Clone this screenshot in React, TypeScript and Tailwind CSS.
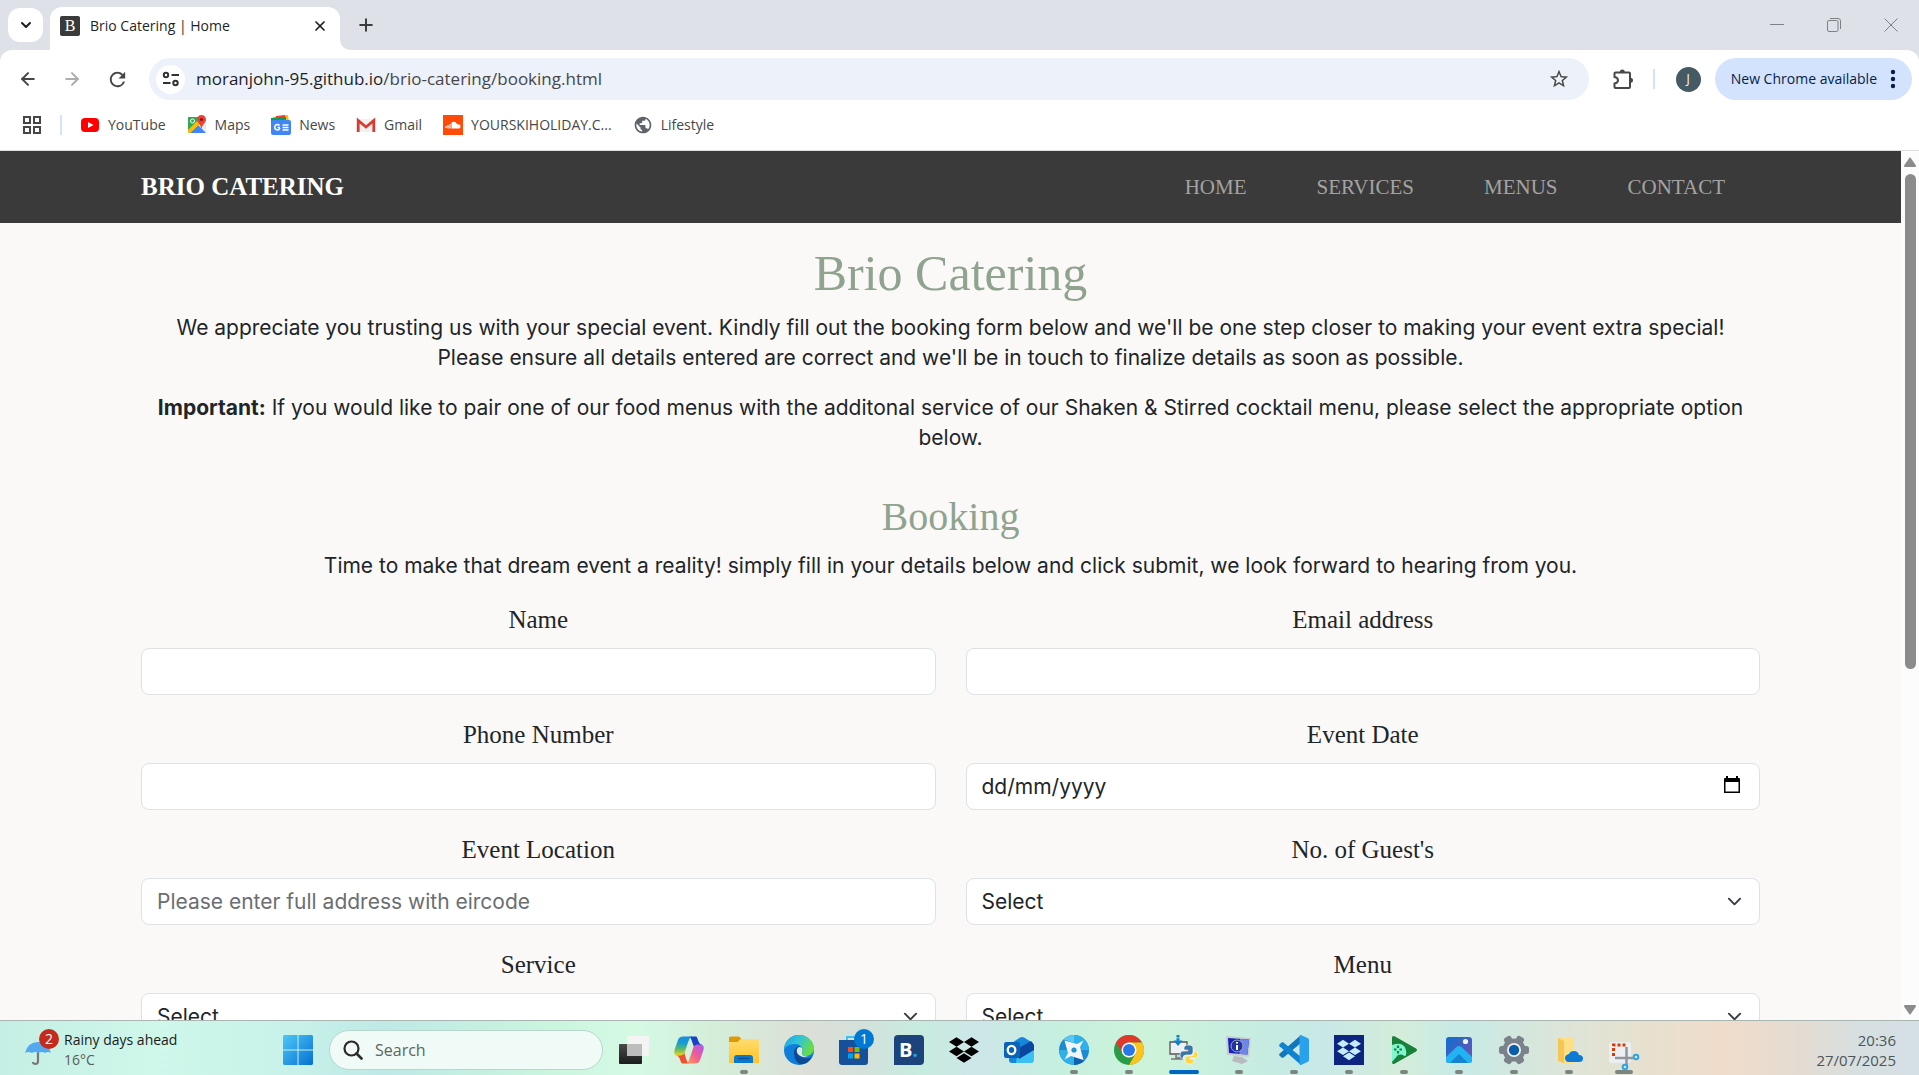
import React from "react";
import { ArrowLeft, ArrowRight, ChevronDown, Plus, X } from "lucide-react";
import { SiDropbox } from "react-icons/si";
import { MdOutlineStarBorder, MdRefresh, MdPublic } from "react-icons/md";

const ui = "font-['Open_Sans','Noto_Sans',sans-serif]";
const serif = "font-['Liberation_Serif',serif]";

/* ---------- Browser chrome ---------- */

function TabStrip() {
  return (
    <header className="flex h-[50px] shrink-0 items-end bg-[#dee1e8]">
      <button aria-label="Search tabs" className="mb-2 ml-2 flex h-[34px] w-[35px] items-center justify-center rounded-xl bg-white">
        <ChevronDown className="size-4 text-[#1f1f1f]" strokeWidth={3} />
      </button>
      <div className="ml-[7px] flex h-[43px] w-[290px] items-center rounded-t-xl bg-white pr-3 pb-[6px] pl-[10px]">
        <span className={`flex size-5 items-center justify-center rounded-xs bg-[#3a3a3a] text-base leading-none text-white ${serif}`}>B</span>
        <span className="ml-[10px] grow text-sm text-[#1f1f1f]">Brio Catering | Home</span>
        <button aria-label="Close tab"><X className="size-4 text-[#1f1f1f]" strokeWidth={2.6} /></button>
      </div>
      <svg className="size-3 text-white" viewBox="0 0 12 12" fill="currentColor"><path d="M0 0Q0 12 12 12H0z" /></svg>
      <button aria-label="New tab" className="mb-[15px] ml-1"><Plus className="size-5 text-[#3c3c3c]" strokeWidth={2.4} /></button>
      <div className="mb-[18px] ml-auto flex items-center gap-[43px] pr-[21px] text-[#7d8085]">
        <button aria-label="Minimize">
          <svg className="size-[14px]" viewBox="0 0 14 14" stroke="currentColor"><path d="M0 6.5h14" /></svg>
        </button>
        <button aria-label="Restore">
          <svg className="size-[14px]" viewBox="0 0 14 14" fill="none" stroke="currentColor"><rect x=".5" y="2.5" width="10.500" height="11" rx="1.500" /><path d="M3 .5h8a2.500 2.500 0 0 1 2.500 2.500v8" /></svg>
        </button>
        <button aria-label="Close">
          <svg className="size-[14px]" viewBox="0 0 14 14" stroke="currentColor"><path d="M.5.5l13 13M13.500.5l-13 13" /></svg>
        </button>
      </div>
    </header>
  );
}

function Toolbar() {
  return (
    <div className="shrink-0 bg-[#dee1e8]">
      <div className="flex h-[58px] items-center rounded-t-xl bg-white pr-[7px] pl-[18px] text-[#474747]">
        <button aria-label="Back"><ArrowLeft className="size-5" strokeWidth={2.4} /></button>
        <button aria-label="Forward" className="ml-6 text-[#adadad]"><ArrowRight className="size-5" strokeWidth={2.4} /></button>
        <button aria-label="Reload" className="ml-6"><MdRefresh className="size-[23px]" /></button>
        <div className="ml-5 flex h-[42px] grow items-center rounded-full bg-[#ecf1fa] pr-[19px] pl-[7px]">
          <button aria-label="View site information" className="flex size-[29px] items-center justify-center rounded-full bg-white">
            <svg className="size-[18px]" viewBox="0 0 18 18" fill="none" stroke="#333" strokeWidth="2"><circle cx="4" cy="5" r="2.200" /><path d="M9.500 5H17M1 13h7.500" /><circle cx="13.500" cy="13" r="2.200" /></svg>
          </button>
          <div className="relative ml-[11px] min-w-0 grow text-[17px] leading-7">
            <input aria-label="Address and search bar" readOnly defaultValue="moranjohn-95.github.io/brio-catering/booking.html" className="w-full bg-transparent text-transparent outline-none" />
            <span aria-hidden="true" className="pointer-events-none absolute inset-0 text-[#1f1f1f]">
              moranjohn-95.github.io<span className="text-[#474747]">/brio-catering/booking.html</span>
            </span>
          </div>
          <button aria-label="Bookmark this tab"><MdOutlineStarBorder className="size-[22px]" /></button>
        </div>
        <button aria-label="Extensions" className="ml-[23px]">
          <svg className="size-[22px]" viewBox="0 0 22 22"><path d="M2.500 5.500a1 1 0 0 1 1-1H17a1 1 0 0 1 1 1V19a1 1 0 0 1-1 1H3.500a1 1 0 0 1-1-1v-3.500q3.500-.5 3.500-3.200T2.500 9z" fill="none" stroke="#474747" strokeWidth="2" /><path d="M7.800 4a2.500 2.500 0 0 1 5 0zM18.500 9.800a2.500 2.500 0 0 1 0 5z" fill="#474747" /></svg>
        </button>
        <span className="ml-[19px] h-5 w-[2px] bg-[#d3e3fd]" />
        <button aria-label="Profile J" className="ml-[21px] flex size-[25px] items-center justify-center rounded-full bg-[#455a64] text-xs text-white">J</button>
        <button className="ml-[14px] flex h-[42px] items-center gap-[9px] rounded-full bg-[#d3e3fd] pr-3 pl-4 text-sm text-[#041e49]">
          New Chrome available
          <svg className="h-5 w-[14px]" viewBox="0 0 14 20" fill="currentColor"><circle cx="7" cy="3" r="2.200" /><circle cx="7" cy="10" r="2.200" /><circle cx="7" cy="17" r="2.200" /></svg>
        </button>
      </div>
    </div>
  );
}

const bookmarks = [
  {
    label: "YouTube",
    icon: <><rect x="1" y="3" width="18" height="14" rx="4" fill="#f00" /><path d="M8 7l5.500 3L8 13z" fill="#fff" /></>,
  },
  {
    label: "Maps",
    icon: <><path d="M1 2h12l5 8v8H1z" fill="#34a853" /><path d="M1 18L16 4l3 5v9z" fill="#e8eaed" /><path d="M3 18l8-8 8 8z" fill="#4285f4" /><path d="M1 15L13 3l3 3L3 18H1z" fill="#fbbc04" /><circle cx="5.500" cy="6" r="2" fill="none" stroke="#fff" /><path d="M14.500 0a4.500 4.500 0 0 1 4.500 4.500c0 3.500-3.500 4-4.500 9.500-1-5.500-4.500-6-4.500-9.500A4.500 4.500 0 0 1 14.500 0z" fill="#ea4335" /><circle cx="14.500" cy="4.500" r="1.600" fill="#811411" /></>,
  },
  {
    label: "News",
    icon: <><path d="M2 2l15-2 1 7H2z" fill="#fbbc04" /><path d="M5 1l9-1 1 5H5z" fill="#ea4335" /><path d="M0 3l15-1v5H0z" fill="#0c9d58" /><rect y="5" width="20" height="15" rx="2" fill="#4285f4" /><path d="M9 12.500H6.500M8.500 10.500A2.700 2.700 0 1 0 9 13" stroke="#fff" strokeWidth="1.500" fill="none" /><path d="M11.500 10h6M11.500 12.500h6M11.500 15h6" stroke="#fff" strokeWidth="1.400" /></>,
  },
  {
    label: "Gmail",
    icon: <><rect x="1" y="4" width="18" height="13" rx="1" fill="#f1f1f1" /><path d="M2.200 17V5.500L10 12l7.800-6.500V17" stroke="#d93b30" strokeWidth="2.800" fill="none" /></>,
  },
  {
    label: "YOURSKIHOLIDAY.C...",
    icon: <><rect width="20" height="20" fill="#ff4a0a" /><path d="M3 13v-2M5 13.500V10M7 13.500V9" stroke="#fff" strokeWidth="1.200" /><path d="M8.500 13.500V7.500c3-2 5.500 0 5.500 2 2-.5 3.500.5 3.500 2s-1 2-2 2z" fill="#fff" /></>,
  },
];

function BookmarksBar() {
  return (
    <nav aria-label="Bookmarks" className="flex h-[43px] shrink-0 items-center border-b border-[#dcdfe2] bg-white pb-2 pl-[22px] text-sm text-[#474747]">
      <button aria-label="All apps">
        <svg className="size-5" viewBox="0 0 20 20" fill="none" stroke="#474747" strokeWidth="2"><path d="M2 2h6v6H2zM12 2h6v6h-6zM2 12h6v6H2zM12 12h6v6h-6z" /></svg>
      </button>
      <span className="mr-[18px] ml-[18px] h-5 w-[2px] bg-[#d3e3fd]" />
      <div className="flex items-center gap-[21px]">
        {bookmarks.map((b) => (
          <a key={b.label} href="#" className="flex items-center gap-2">
            <svg className="size-5" viewBox="0 0 20 20">{b.icon}</svg>
            {b.label}
          </a>
        ))}
        <a href="#" className="flex items-center gap-2"><MdPublic className="size-5 text-[#5f6368]" />Lifestyle</a>
      </div>
    </nav>
  );
}

/* ---------- Web page ---------- */

const control = "h-[47px] w-full rounded-lg border border-[#dee2e6] bg-white px-[15px] text-[21px] text-[#212529] placeholder:text-[#6a6e73]";

function Field({ id, label, children }: { id: string; label: string; children: React.ReactNode }) {
  return (
    <div>
      <label htmlFor={id} className={`mb-[10px] block text-center text-[25px] leading-[37px] ${serif}`}>{label}</label>
      {children}
    </div>
  );
}

function SelectBox({ id }: { id: string }) {
  return (
    <div className="relative">
      <select id={id} className={`appearance-none ${control}`}><option>Select</option></select>
      <svg className="pointer-events-none absolute top-4 right-[18px] size-[15px]" viewBox="0 0 16 16" fill="none" stroke="#343a40" strokeLinecap="round" strokeLinejoin="round" strokeWidth="2"><path d="m2 5 6 6 6-6" /></svg>
    </div>
  );
}

function BookingPage() {
  return (
    <div className="min-w-0 grow overflow-hidden bg-[#faf9f7] font-[Inter,sans-serif] text-[21px] leading-[30px] text-[#212529]">
      <nav className={`flex h-[72px] items-center bg-[#3a3a3a] px-[141px] ${serif}`}>
        <a href="#" className="text-[25px] font-bold text-white">BRIO CATERING</a>
        <div className="ml-auto flex text-[#a3a3a3]">
          {["HOME", "SERVICES", "MENUS", "CONTACT"].map((t) => <a key={t} href="#" className="px-[35px]">{t}</a>)}
        </div>
      </nav>
      <main className="px-[141px] pt-5 text-center">
        <h1 className={`mb-[10px] text-[50px] leading-[60px] text-[#8fa38f] ${serif}`}>Brio Catering</h1>
        <p>We appreciate you trusting us with your special event. Kindly fill out the booking form below and we'll be one step closer to making your event extra special!<br />Please ensure all details entered are correct and we'll be in touch to finalize details as soon as possible.</p>
        <p className="mt-5"><strong className="font-bold">Important:</strong> If you would like to pair one of our food menus with the additonal service of our Shaken &amp; Stirred cocktail menu, please select the appropriate option<br />below.</p>
        <h2 className={`mt-10 mb-[10px] text-[40px] leading-[48px] text-[#8fa38f] ${serif}`}>Booking</h2>
        <p>Time to make that dream event a reality! simply fill in your details below and click submit, we look forward to hearing from you.</p>
        <form className="mt-5 grid grid-cols-2 gap-x-[30px] gap-y-[21px]">
          <Field id="name" label="Name"><input id="name" type="text" className={control} /></Field>
          <Field id="email" label="Email address"><input id="email" type="email" className={control} /></Field>
          <Field id="phone" label="Phone Number"><input id="phone" type="tel" className={control} /></Field>
          <Field id="date" label="Event Date">
            <div className="relative">
              <input id="date" type="text" placeholder="dd/mm/yyyy" className="h-[47px] w-full rounded-lg border border-[#dee2e6] bg-white px-[15px] text-[21px] text-[#212529] placeholder:text-[#212529]" />
              <button type="button" aria-label="Choose date" className="absolute top-3 right-[18px]">
                <svg className="size-5" viewBox="0 0 20 20"><path d="M4 1h2v2h8V1h2v2h1a1 1 0 0 1 1 1v14H2V4a1 1 0 0 1 1-1h1zM3.500 7v9.500h13V7z" fillRule="evenodd" /></svg>
              </button>
            </div>
          </Field>
          <Field id="location" label="Event Location"><input id="location" type="text" placeholder="Please enter full address with eircode" className={control} /></Field>
          <Field id="guests" label="No. of Guest's"><SelectBox id="guests" /></Field>
          <Field id="service" label="Service"><SelectBox id="service" /></Field>
          <Field id="menu" label="Menu"><SelectBox id="menu" /></Field>
        </form>
      </main>
    </div>
  );
}

function Scrollbar() {
  return (
    <div aria-hidden="true" className="flex w-[18px] shrink-0 flex-col items-center bg-[#fcfcfc] pt-[6px] pb-[5px]">
      <svg className="h-[10px] w-3" viewBox="0 0 12 10" fill="#8b8b8b"><path d="M6 0 12 8.500Q12 10 11 10H1Q0 10 0 8.500z" /></svg>
      <div className="mt-[7px] h-[495px] w-[11px] rounded-full bg-[#8b8b8b]" />
      <svg className="mt-auto h-[10px] w-3" viewBox="0 0 12 10" fill="#8b8b8b"><path d="M6 10 12 1.500Q12 0 11 0H1Q0 0 0 1.500z" /></svg>
    </div>
  );
}

/* ---------- Taskbar ---------- */

type Mark = "none" | "dot" | "active" | "wide";
type TaskbarApp = { name: string; mark: Mark; badge?: string; icon: React.ReactNode };

const Box = ({ children }: { children: React.ReactNode }) => <svg className="size-[30px] overflow-visible" viewBox="0 0 30 30">{children}</svg>;

const apps: TaskbarApp[] = [
  { name: "Task view", mark: "none", icon: <Box><defs><linearGradient id="tv" x2="0" y2="1"><stop stopColor="#4a4a4a" /><stop offset="1" stopColor="#1c1c1c" /></linearGradient></defs><rect y="9" width="23" height="20" rx="1" fill="url(#tv)" /><rect x="8" y="1" width="22" height="20" rx="1" fill="#f4f4f4" /><path d="M8 9h15v12H8z" fill="#bdbdbd" /></Box> },
  { name: "Copilot", mark: "none", icon: <Box><defs><linearGradient id="cp1" x2="0" y2="1"><stop stopColor="#1a8be6" /><stop offset=".35" stopColor="#169fd0" /><stop offset=".65" stopColor="#5cb86a" /><stop offset="1" stopColor="#f2d21c" /></linearGradient><linearGradient id="cp2" x1="1" x2="0" y2="1"><stop stopColor="#a45cf2" /><stop offset=".5" stopColor="#ee5c96" /><stop offset="1" stopColor="#ffa04d" /></linearGradient></defs><path d="M22 1.500h-7q2 1 3 5l2 5.500 3-2h5q-3-1-4-5t-2-3.500z" fill="#1443c9" /><path d="M8 28.500h7q-2-1-3-5L10 17l-4 3-4 .5q3 .5 4 4t2 4z" fill="#ee5030" /><path d="M9 1.500h9q-2.500 1-4 6l-3 9q-1 4-5 4H4q-5 0-3.500-5.500L4 5q1-3.500 5-3.500z" fill="url(#cp1)" /><path d="M21 28.500h-9q2.500-1 4-6l3-9q1-4 5-4h2q5 0 3.500 5.500L26 25q-1 3.500-5 3.500z" fill="url(#cp2)" /></Box> },
  { name: "File Explorer", mark: "dot", icon: <Box><defs><linearGradient id="fe" x2="0" y2="1"><stop stopColor="#ffdc6e" /><stop offset="1" stopColor="#ffc328" /></linearGradient></defs><path d="M0 3q0-1.500 1.500-1.500H10l3 3h-2L8 8H0z" fill="#dc9a08" /><path d="M0 7h9l3-3h16.500Q30 4 30 5.500V28H0z" fill="url(#fe)" /><path d="M5 28v-5q0-3 3-3h13q3 0 3 3v5z" fill="#0b78cf" /><path d="M9 23.500h11" stroke="#0a4b8c" strokeWidth="1.200" /></Box> },
  { name: "Microsoft Edge", mark: "none", icon: <Box><defs><linearGradient id="e1" x2="1" y2=".4"><stop stopColor="#1fa3e8" /><stop offset=".5" stopColor="#2fc3d8" /><stop offset="1" stopColor="#68dd4a" /></linearGradient></defs><circle cx="15" cy="15" r="15" fill="#0f7ddb" /><path d="M0 15C0 6 7 0 15 0s15 6 15 13c0 5-4 8-8 8-3 0-5-1-4-3 2-4-1-9-7-9C5 9 1 12 0 15z" fill="url(#e1)" /><path d="M10 18c0-4 3-7 6-7-3 4-2 8 1 11 3 2 8 2 11-.5-2 5-7 8.500-12 7.500-4-1.500-6-6-6-11z" fill="#0b4a94" /><path d="M15.500 12c3 0 3.500 3 2.500 5.500-1 3 3 4.500 6.500 3.500-4 2-9 .5-11-2.500-1.500-3-.5-6 2-6.500z" fill="#dde9e6" /></Box> },
  { name: "Microsoft Store", mark: "none", badge: "1", icon: <Box><path d="M8 6V2h12v4" fill="none" stroke="#35c5f3" strokeWidth="2" /><path d="M0 5h29v22q0 3-3 3H3q-3 0-3-3z" fill="#17509a" /><path d="M9 12h5v5H9z" fill="#f25022" /><path d="M15.500 12h5v5h-5z" fill="#7fba00" /><path d="M9 18.500h5v5H9z" fill="#00a4ef" /><path d="M15.500 18.500h5v5h-5z" fill="#ffb900" /></Box> },
  { name: "Booking.com", mark: "none", icon: <span className="flex size-[30px] items-center justify-center rounded-sm rounded-bl-none bg-[#1c437c] text-xl font-bold leading-none text-white">B<span className="text-[#1aa5ea]">.</span></span> },
  { name: "Dropbox", mark: "none", icon: <SiDropbox className="size-[30px] text-black" /> },
  { name: "Outlook", mark: "none", icon: <Box><path d="M5 10 16 2.500q2-1 4 0L29 8v17q0 3-3 3H8q-3 0-3-3z" fill="#1587dc" /><path d="M13 20 30 9v16q0 3-3 3H12z" fill="#3cc0f2" /><path d="M13 14 27 6l3 4v5L15 24z" fill="#0a47a0" /><rect y="7" width="16" height="16" rx="2" fill="#0b63b8" /><ellipse cx="7.500" cy="15" rx="3.800" ry="4.200" fill="none" stroke="#fff" strokeWidth="2.300" /></Box> },
  { name: "Compass", mark: "dot", icon: <Box><circle cx="15" cy="15" r="15" fill="#1d8bd4" /><path d="M15 0a15 15 0 0 1 15 15H15zM15 30A15 15 0 0 1 0 15h15z" fill="#2fb0e8" /><path d="M15 0v8L4.500 4.500A15 15 0 0 1 15 0z" fill="#5bc9f2" /><path d="M15 30v-8l10.500 3.500A15 15 0 0 1 15 30z" fill="#0f62ae" /><path d="M5.500 5.500 18 9l6.500-3.500L21 12l3.500 13-12.500-4-6.500 3.500L9 18z" fill="#f1f5f8" /><circle cx="15" cy="15" r="2.600" fill="#1e93d8" /></Box> },
  { name: "Google Chrome", mark: "dot", icon: <Box><circle cx="15" cy="15" r="15" fill="#2a9c48" /><path d="M2 7.500A15 15 0 0 1 28 7.500H15L8.500 18.800z" fill="#e0382b" /><path d="M28 7.500A15 15 0 0 1 15 30l6.500-11.300L15 7.500z" fill="#fcc31e" /><circle cx="15" cy="15" r="7.500" fill="#fff" /><circle cx="15" cy="15" r="6" fill="#2b76e8" /></Box> },
  { name: "Python installer", mark: "active", icon: <Box><path d="M1 7h17v12H1z" fill="#eef1f4" stroke="#555" strokeWidth="1.300" /><path d="M7 19h5v4H7zM2 24h12" stroke="#777" strokeWidth="1.500" fill="#ccc" /><path d="M9 0v7" stroke="#0f7fd0" strokeWidth="3" strokeDasharray="2.500 .8" /><path d="M4.500 5.500h9L9 11z" fill="#0f7fd0" /><path d="M11 20q0-4 3-4h5v-1h-4v-2q0-3 4.500-3t4.500 3v4q0 3-3 3h-4q-3 0-3 3v1q-3 0-3-4z" fill="#3b76a8" stroke="#fff" strokeWidth=".6" /><path d="M29 20q0-4-3-4h-1v2q0 3-3 3h-4q-2 0-2 3v2q0 3 4.500 3t4.500-3v-2h-4v-1h5q3 0 3-3z" fill="#ffd548" stroke="#fff" strokeWidth=".6" /></Box> },
  { name: "System information", mark: "dot", icon: <Box><path d="M2 1l25 2-2 19-22-2z" fill="#c9cbd0" /><path d="M4 3l21 1.500-1.600 15L5 18z" fill="#1322b8" /><path d="M16 4l9 .5-1.600 15-8-.6z" fill="#6d86ea" /><circle cx="13" cy="11" r="6" fill="#24329e" stroke="#99aabb" /><path d="M13 10v5M13 7v1.500" stroke="#fff" strokeWidth="2" /><path d="M10 21l8 1 6 4-6 3-10-3z" fill="#b8babd" /></Box> },
  { name: "Visual Studio Code", mark: "dot", icon: <Box><path d="M22 0v8L4.500 22.500q-1 .6-2 0L.5 20.500q-.8-1 0-1.800z" fill="#1276bd" /><path d="M22 30v-8L4.500 7.500q-1-.6-2 0L.5 9.500q-.8 1 0 1.800z" fill="#0f83d0" /><path d="M22 0l7 3.200q1 .5 1 1.800v20q0 1.300-1 1.800L22 30q-1.500.2-1.500-1.500v-27Q20.500-.2 22 0z" fill="#2aa1ec" /></Box> },
  { name: "Dropbox desktop", mark: "dot", icon: <span className="flex size-[30px] items-center justify-center bg-[#0d2481]"><SiDropbox className="size-6 text-[#c3ecff]" /></span> },
  { name: "Google Play Games", mark: "dot", icon: <Box><path d="M3 3q0-3 3-1.500l21 12q2 1.500 0 3L6 28.500Q3 30 3 27z" fill="#188038" /><path d="M3 10q8-3 12 1 3 4 2 9-1 2-3 0-2-1-5 0L3 27z" fill="#80f5cf" /><path d="M9 10.500v2.500M9 16v2.500M5 14.500h2.500M10.500 14.500H13" stroke="#188038" strokeWidth="2.200" /></Box> },
  { name: "Photos", mark: "dot", icon: <Box><defs><linearGradient id="ph" x2="1" y2="1"><stop stopColor="#0b6fd0" /><stop offset="1" stopColor="#7a4fb0" /></linearGradient></defs><rect x="2" y="2" width="26" height="26" rx="3" fill="url(#ph)" /><path d="M2 22 12.500 12q2.500-2 5 0L28 22v3q0 3-3 3H5q-3 0-3-3z" fill="#22b3f2" /><path d="M6 28l9-9 9 9z" fill="#1583cf" /><circle cx="21.500" cy="6.500" r="2.600" fill="#f2f4ff" /></Box> },
  { name: "Settings", mark: "dot", icon: <Box><g fill="#7b828a"><circle cx="15" cy="15" r="11.500" />{[0, 60, 120].map((a) => <rect key={a} x="0" y="11" width="30" height="8" rx="2.500" transform={`rotate(${a} 15 15)`} />)}</g><circle cx="15" cy="15" r="7" fill="#f1f3f5" /><circle cx="15" cy="15" r="5.200" fill="#0b5cad" /></Box> },
  { name: "OneDrive folder", mark: "dot", icon: <Box><path d="M4 3h14q2 0 2 2v23H7z" fill="#ffdf85" /><path d="M4 3l6 3v22l-6-2z" fill="#f5c654" /><path d="M14 27q-3-1-3-4t4-4q1-3 5-3t5 4q4 0 4 3.500T25 27z" fill="#0d7ad4" /></Box> },
  { name: "Snipping Tool", mark: "wide", icon: <Box><rect x="0" y="7" width="22" height="21" rx="3" fill="#eceff1" /><path d="M4.500 21V10h13" fill="none" stroke="#d83b01" strokeWidth="3" strokeDasharray="3 2" /><path d="M17.500 12v19M6 23h18" stroke="#90969b" strokeWidth="2.500" /><circle cx="27" cy="22" r="2.300" fill="none" stroke="#2aa5ea" strokeWidth="2" /><circle cx="16" cy="32" r="2.300" fill="none" stroke="#2aa5ea" strokeWidth="2" /></Box> },
];

const markClass: Record<Mark, string> = {
  none: "hidden",
  dot: "w-2 bg-[#7c857f]",
  active: "w-[30px] bg-[#0067c0]",
  wide: "w-[18px] bg-[#7c857f]",
};

function Taskbar() {
  return (
    <footer className="flex h-[55px] shrink-0 items-center border-t border-[#a9b5b1] bg-[linear-gradient(90deg,#c5efe4_0%,#cff7ea_8%,#c8f2e9_15%,#bee9e6_20%,#c9f4de_28%,#d5fae4_33%,#d4eeda_37%,#dddfd7_42%,#d3e1db_45%,#c7ecdf_48%,#cde6e8_51%,#c6efdf_55%,#cdf3da_60%,#c6ece2_66%,#c8e8e7_69%,#d4edda_73%,#c7eae6_76%,#dbe5d9_81%,#e8e0ce_86%,#f0dccb_90%,#e3dcd3_94%,#d6dfe1_97%,#d5e0e5_100%)] pt-1 text-sm text-[#1a1a1a]">
      <button className="flex w-[270px] items-center pl-6 text-left leading-5">
        <span className="relative mr-[6px] size-[34px] shrink-0">
          <svg className="size-[34px]" viewBox="0 0 34 34"><path d="M14 18v10q0 3-2.500 3T9 29" stroke="#777" strokeWidth="2.200" fill="none" /><path d="M1 20Q4 9 14 9t13 11q-3-2-6 0-3-2-7 0-3-2-6 0-4-2-7 0z" fill="#54a8f0" /></svg>
          <span className="absolute -top-1 left-[15px] flex size-5 items-center justify-center rounded-full bg-[#c42b1c] text-white">2</span>
        </span>
        <span>Rainy days ahead<br /><span className="text-[#555f5b]">16°C</span></span>
      </button>
      <button aria-label="Start" className="flex w-[55px] justify-center">
        <Box><defs><linearGradient id="win" x2="1" y2="1"><stop stopColor="#4cc8fa" /><stop offset="1" stopColor="#0670d0" /></linearGradient></defs><path d="M1 0h13.500v14.500H0V1zM15.500 0H29l1 1v13.500H15.500zM0 15.500h14.500V30H1l-1-1zM15.500 15.500H30V29l-1 1H15.500z" fill="url(#win)" /></Box>
      </button>
      <label className="mr-[3px] ml-1 flex h-10 w-[274px] items-center gap-3 rounded-full border border-[#b9d8cd] bg-[#f0faf6] px-[13px]">
        <svg className="size-5" viewBox="0 0 20 20" fill="none" stroke="#2b2b2b" strokeWidth="2.200"><circle cx="8.500" cy="8.500" r="7" /><path d="M13.500 13.500 18.500 18.500" strokeLinecap="round" strokeWidth="2.600" /></svg>
        <input aria-label="Search" placeholder="Search" className="min-w-0 grow bg-transparent text-base outline-none placeholder:text-[#5d6663]" />
      </label>
      {apps.map((a) => (
        <button key={a.name} aria-label={a.name} className="relative flex h-full w-[55px] shrink-0 items-center justify-center">
          {a.icon}
          {a.badge && <span className="absolute top-1 right-[7px] flex size-5 items-center justify-center rounded-full bg-[#0078d4] text-white">{a.badge}</span>}
          <span className={`absolute bottom-px h-1 rounded-full ${markClass[a.mark]}`} />
        </button>
      ))}
      <button className="ml-auto pr-[23px] text-right text-[15px] leading-5 text-[#4d5557]">20:36<br />27/07/2025</button>
    </footer>
  );
}

export default function App() {
  return (
    <div className={`flex h-screen flex-col overflow-hidden bg-white ${ui}`}>
      <TabStrip />
      <Toolbar />
      <BookmarksBar />
      <div className="flex min-h-0 grow">
        <BookingPage />
        <Scrollbar />
      </div>
      <Taskbar />
    </div>
  );
}
